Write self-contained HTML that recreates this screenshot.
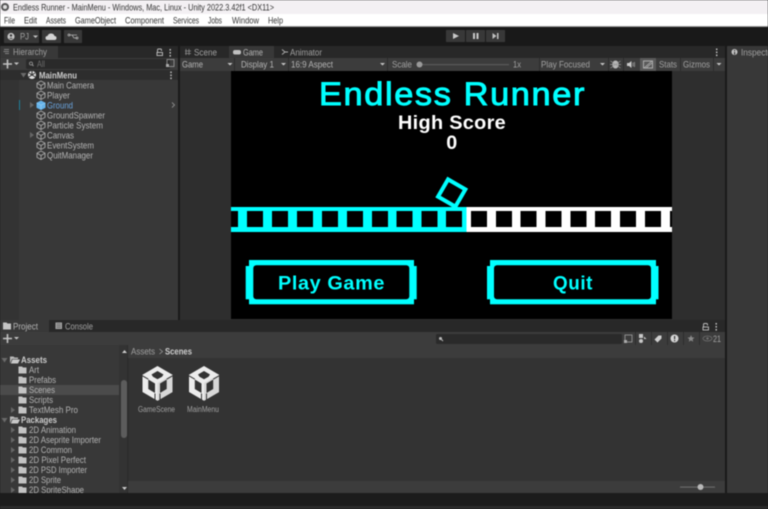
<!DOCTYPE html>
<html lang="en"><head><meta charset="utf-8"><title>Endless Runner - MainMenu - Unity</title>
<style>
html,body{margin:0;padding:0;background:#1c1c1c;width:768px;height:509px;overflow:hidden}
svg{display:block;position:absolute;left:0;top:0}
text{font-family:"Liberation Sans",sans-serif;font-size:9px}
.u{fill:#b4b4b4}.d{fill:#a0a0a0}.b{font-weight:bold;fill:#cccccc}
</style></head><body>
<svg width="768" height="509" viewBox="0 0 768 509" xmlns="http://www.w3.org/2000/svg">
<defs>
<g id="cube" fill="none" stroke="#a8a8a8" stroke-width=".9"><path d="M4.500 .5L8.500 2.600V6.900L4.500 9 .5 6.900V2.600Z"/><path d="M.7 2.800L4.500 5 8.300 2.800M4.500 5V8.800"/></g>
<g id="folder"><path d="M0 1H3.500L4.500 2H8V8H0Z" fill="#c4c4c4"/></g>
<g id="ofolder"><path d="M0 1H3.500L4.500 2H8V3.500H2L0 8Z" fill="#b8b8b8"/><path d="M2.500 4H10L8 8H.8Z" fill="#c8c8c8"/></g>
<path id="tri" d="M0 0L4 3 0 6Z" fill="#666"/>
<path id="trid" d="M0 0H6L3 4.500Z" fill="#6a6a6a"/>
<path id="arr" d="M1 0H6L3.500 2.500Z" fill="#c4c4c4"/>
<g id="unity">
<path d="M15 0L30 8.700V26L15 34.700 0 26V8.700Z" fill="#ececec"/>
<path d="M15 17L30 8.700V26L15 34.700Z" fill="#d8d8d8"/>
<path d="M15 5L21 8.500 19.500 10.800 15 13.300 10.500 10.800 9 8.500Z" fill="#333"/>
<path d="M5.800 13.500L12.500 17.500V27L5.800 23Z" fill="#333"/>
<path d="M24.200 13.500L17.500 17.500V27L24.200 23Z" fill="#333"/>
<path d="M0 9.800L5.800 13.200M30 9.800L24.200 13.200M12.500 27.500V34.700M17.500 27.500V34.700" stroke="#333" stroke-width="1" fill="none"/>
</g>
<g id="lock" fill="none" stroke="#c0c0c0" stroke-width=".9"><path d="M1 4V1.500Q1 .5 2 .5H4Q5 .5 5 1.500V2.500"/><rect x=".5" y="4" width="5.500" height="3"/></g>
<g id="dots" fill="#c4c4c4"><rect width="1.400" height="1.600"/><rect y="3" width="1.400" height="1.600"/><rect y="6" width="1.400" height="1.600"/></g>
<g id="plus"><path d="M3.700 0h1.600v3.700H9v1.600H5.300V9H3.700V5.300H0V3.700h3.700z" fill="#c4c4c4"/><path d="M11 3h5l-2.500 2.500z" fill="#c4c4c4"/></g>
</defs>
<g style="filter:blur(.4px)">
<!-- OS title + menu -->
<rect width="768" height="14" fill="#f3f0f3"/>
<rect y="14" width="768" height="12" fill="#fff"/>
<rect y="26" width="768" height="1" fill="#9a9a9a"/>
<circle cx="5" cy="7" r="4" fill="#555"/><circle cx="5" cy="7" r="2" fill="#ddd"/>
<text x="13" y="10.500" textLength="261" lengthAdjust="spacingAndGlyphs" fill="#333">Endless Runner - MainMenu - Windows, Mac, Linux - Unity 2022.3.42f1 &lt;DX11&gt;</text>
<g fill="#333">
<text x="4" y="23.500" textLength="11" lengthAdjust="spacingAndGlyphs">File</text>
<text x="24" y="23.500" textLength="13" lengthAdjust="spacingAndGlyphs">Edit</text>
<text x="46" y="23.500" textLength="20" lengthAdjust="spacingAndGlyphs">Assets</text>
<text x="75" y="23.500" textLength="41" lengthAdjust="spacingAndGlyphs">GameObject</text>
<text x="125" y="23.500" textLength="39" lengthAdjust="spacingAndGlyphs">Component</text>
<text x="173" y="23.500" textLength="26" lengthAdjust="spacingAndGlyphs">Services</text>
<text x="208" y="23.500" textLength="14" lengthAdjust="spacingAndGlyphs">Jobs</text>
<text x="232" y="23.500" textLength="27" lengthAdjust="spacingAndGlyphs">Window</text>
<text x="268" y="23.500" textLength="15" lengthAdjust="spacingAndGlyphs">Help</text>
</g>
<!-- Unity toolbar -->
<rect y="27" width="768" height="19" fill="#191919"/>
<rect x="4" y="30" width="35" height="13" fill="#383838"/>
<circle cx="11" cy="36.500" r="3.600" fill="#c4c4c4"/><circle cx="11" cy="35.500" r="1.200" fill="#383838"/><path d="M9 38.800q2-2 4 0z" fill="#383838"/>
<text x="20" y="39.500" textLength="9" lengthAdjust="spacingAndGlyphs" class="d">PJ</text>
<use href="#arr" x="32" y="35.500"/>
<rect x="42" y="30" width="19" height="13" fill="#383838"/>
<path d="M47.500 40a2 2 0 0 1 0-4q1-2.800 4-2.500 2.500.3 3 2.500a2 2 0 0 1 0 4z" fill="#d4d4d4"/>
<rect x="64" y="30" width="18" height="13" fill="#383838"/>
<g fill="none" stroke="#b0b0b0" stroke-width=".8"><path d="M69 35h3l2 3h3M72 35h5"/><circle cx="69" cy="35" r="1"/><circle cx="77" cy="38" r="1"/></g>
<rect x="446" y="30" width="19" height="12" fill="#383838"/><rect x="466" y="30" width="19" height="12" fill="#383838"/><rect x="486" y="30" width="19" height="12" fill="#383838"/>
<path d="M453 33l6 3-6 3z" fill="#c8c8c8"/>
<rect x="473" y="33" width="2" height="6" fill="#c8c8c8"/><rect x="476.500" y="33" width="2" height="6" fill="#c8c8c8"/>
<path d="M492.500 33l4 3-4 3z" fill="#c0c0c0"/><rect x="497" y="33" width="1.500" height="6" fill="#c0c0c0"/>
<!-- Hierarchy -->
<rect y="46" width="178" height="12" fill="#282828"/>
<rect y="46" width="58" height="12" fill="#383838"/>
<rect x="0" y="58" width="178" height="262" fill="#383838"/>
<rect x="0" y="70" width="19" height="250" fill="#333"/>
<rect y="58" width="178" height="12" fill="#3c3c3c"/>
<path d="M4 49.500h5M3.500 51.500h5.500M5 53.500h4" stroke="#999" stroke-width=".8"/>
<text x="13" y="55" textLength="34" lengthAdjust="spacingAndGlyphs" class="d">Hierarchy</text>
<use href="#lock" x="156.500" y="48.500"/><use href="#dots" x="169.500" y="49"/>
<use href="#plus" x="3" y="59.500"/>
<rect x="26" y="59" width="144" height="10" rx="2" fill="#2a2a2a"/>
<circle cx="31" cy="63.500" r="1.500" fill="none" stroke="#999" stroke-width=".8"/><path d="M32 64.500l1.500 1.500" stroke="#999"/>
<text x="37" y="67" textLength="8" lengthAdjust="spacingAndGlyphs" fill="#6c6c6c">All</text>
<rect x="167" y="59.500" width="7" height="7" fill="none" stroke="#aaa" stroke-width=".7"/><rect x="166" y="64" width="3" height="3" fill="#aaa"/>
<rect y="70" width="178" height="10" fill="#2d2d2d"/>
<use href="#trid" x="20.500" y="73"/>
<circle cx="32" cy="75" r="4" fill="#e0e0e0"/><path d="M32 71v4l-3.400 2M32 75l3.400 2M29 73l3 2 3-2" stroke="#2d2d2d" stroke-width="1" fill="none"/>
<text x="39" y="78.500" textLength="38" lengthAdjust="spacingAndGlyphs" class="b">MainMenu</text>
<use href="#dots" x="170.300" y="71.500"/>
<use href="#cube" x="36.500" y="80.500"/><text x="47" y="88.300" textLength="47" lengthAdjust="spacingAndGlyphs" class="u">Main Camera</text>
<use href="#cube" x="36.500" y="90.500"/><text x="47" y="98.300" textLength="23" lengthAdjust="spacingAndGlyphs" class="u">Player</text>
<rect x="19" y="100" width="1" height="10" fill="#1e7f9a"/>
<use href="#tri" x="30" y="102"/>
<path d="M41 100.500l4.500 2.300v4.900L41 110l-4.500-2.300v-4.900z" fill="#66b3ea"/><path d="M36.700 103l4.300 2.200 4.300-2.200M41 105v4.800" stroke="#a8d8f5" stroke-width=".5" fill="none"/>
<text x="47" y="108.300" textLength="26" lengthAdjust="spacingAndGlyphs" fill="#6aa3dc">Ground</text>
<path d="M172 102.500l2.500 2.500-2.500 2.500" fill="none" stroke="#888"/>
<use href="#cube" x="36.500" y="110.500"/><text x="47" y="118.300" textLength="58" lengthAdjust="spacingAndGlyphs" class="u">GroundSpawner</text>
<use href="#cube" x="36.500" y="120.500"/><text x="47" y="128.300" textLength="56" lengthAdjust="spacingAndGlyphs" class="u">Particle System</text>
<use href="#tri" x="30" y="132"/>
<use href="#cube" x="36.500" y="130.500"/><text x="47" y="138.300" textLength="27" lengthAdjust="spacingAndGlyphs" class="u">Canvas</text>
<use href="#cube" x="36.500" y="140.500"/><text x="47" y="148.300" textLength="47" lengthAdjust="spacingAndGlyphs" class="u">EventSystem</text>
<use href="#cube" x="36.500" y="150.500"/><text x="47" y="158.300" textLength="46" lengthAdjust="spacingAndGlyphs" class="u">QuitManager</text>
<rect x="178" y="46" width="2" height="274" fill="#191919"/>
<!-- Game panel -->
<rect x="180" y="46" width="545" height="12" fill="#282828"/>
<rect x="229" y="46" width="45" height="12" fill="#383838"/>
<rect x="180" y="58" width="545" height="13" fill="#3c3c3c"/>
<rect x="180" y="71" width="545" height="249" fill="#2e2e2e"/>
<path d="M186 49v6M189 49v6M185 51h6M185 53.500h6" stroke="#8a8a8a" stroke-width=".8"/>
<text x="194" y="55.300" textLength="23" lengthAdjust="spacingAndGlyphs" class="d">Scene</text>
<rect x="233" y="50" width="8" height="4.500" rx="2" fill="#c0c0c0"/>
<text x="243" y="55.300" textLength="20" lengthAdjust="spacingAndGlyphs" class="u">Game</text>
<path d="M282 49.500l3 2.500-3 2.500M285 52h3" stroke="#b0b0b0" fill="none" stroke-width=".9"/>
<text x="290" y="55.300" textLength="32" lengthAdjust="spacingAndGlyphs" class="d">Animator</text>
<use href="#dots" x="716" y="48.500"/>
<text x="182" y="67.500" textLength="21" lengthAdjust="spacingAndGlyphs" class="u">Game</text>
<use href="#arr" x="226.500" y="63"/>
<rect x="234" y="58" width="1" height="13" fill="#2c2c2c"/>
<text x="241" y="67.500" textLength="33" lengthAdjust="spacingAndGlyphs" class="u">Display 1</text>
<use href="#arr" x="280" y="63"/>
<rect x="288" y="58" width="1" height="13" fill="#2c2c2c"/>
<text x="291" y="67.500" textLength="42" lengthAdjust="spacingAndGlyphs" class="u">16:9 Aspect</text>
<use href="#arr" x="379" y="63"/>
<rect x="387" y="58" width="1" height="13" fill="#2c2c2c"/>
<text x="392" y="67.500" textLength="20" lengthAdjust="spacingAndGlyphs" class="d">Scale</text>
<rect x="419" y="64" width="90" height="1.200" fill="#5a5a5a"/>
<circle cx="419.500" cy="64.500" r="3" fill="#9a9a9a"/>
<text x="513" y="67.500" textLength="8" lengthAdjust="spacingAndGlyphs" class="d">1x</text>
<rect x="539" y="58" width="1" height="13" fill="#2c2c2c"/>
<text x="541" y="67.500" textLength="49" lengthAdjust="spacingAndGlyphs" class="d">Play Focused</text>
<use href="#arr" x="599" y="63"/>
<rect x="608" y="58" width="1" height="13" fill="#2c2c2c"/>
<ellipse cx="615.500" cy="64.500" rx="3.200" ry="4" fill="#b8b8b8"/><path d="M610.500 61l10 7M610.500 68l10-7M610 64.500h11" stroke="#9a9a9a" stroke-width=".7"/>
<rect x="623" y="58" width="1" height="13" fill="#2c2c2c"/>
<path d="M627 63h2l2.500-2v7l-2.500-2h-2z" fill="#c8c8c8"/><path d="M633 62.500v4M634.500 62v5" stroke="#aaa" stroke-width=".7"/>
<rect x="640" y="58" width="16" height="13" fill="#5a5a5a"/>
<rect x="643.500" y="61" width="9" height="7" fill="none" stroke="#b4b4b4" stroke-width=".9"/><path d="M644 68l8-7M646 68l6-5" stroke="#b4b4b4" stroke-width=".8"/>
<text x="659" y="67.500" textLength="18" lengthAdjust="spacingAndGlyphs" class="d">Stats</text>
<rect x="680" y="58" width="1" height="13" fill="#2c2c2c"/>
<text x="683" y="67.500" textLength="27" lengthAdjust="spacingAndGlyphs" class="d">Gizmos</text>
<rect x="713" y="58" width="1" height="13" fill="#2c2c2c"/>
<use href="#arr" x="715.500" y="63"/>
<!-- Game view -->
<rect x="231" y="71" width="441" height="248" fill="#000"/>
<text x="319" y="105" textLength="267" lengthAdjust="spacingAndGlyphs" style="font-size:32px;letter-spacing:1.500px" fill="#00ffff" stroke="#00ffff" stroke-width=".9">Endless Runner</text>
<text x="398" y="129" textLength="108" lengthAdjust="spacingAndGlyphs" style="font-size:19.500px;font-weight:bold;letter-spacing:.3px" fill="#fff">High Score</text>
<text x="446.300" y="149" textLength="11" lengthAdjust="spacingAndGlyphs" style="font-size:19.500px;font-weight:bold" fill="#fff">0</text>
<g transform="translate(451.700 193) rotate(30)"><rect x="-10" y="-10" width="20" height="20" fill="#000" stroke="#00ffff" stroke-width="4"/></g>
<rect x="231" y="207" width="235.500" height="25" fill="#00ffff"/>
<rect x="466.500" y="207" width="205.500" height="25" fill="#fff"/>
<g fill="#000">
<rect x="231" y="211" width="7" height="16"/><rect x="247" y="211" width="16" height="16"/><rect x="272" y="211" width="16" height="16"/><rect x="297" y="211" width="16" height="16"/><rect x="322" y="211" width="16" height="16"/><rect x="347" y="211" width="16" height="16"/><rect x="372" y="211" width="16" height="16"/><rect x="396.500" y="211" width="16" height="16"/><rect x="421.500" y="211" width="16" height="16"/><rect x="446" y="211" width="16" height="16"/>
<rect x="471" y="211" width="16" height="16"/><rect x="496" y="211" width="16" height="16"/><rect x="520.500" y="211" width="16" height="16"/><rect x="545.500" y="211" width="16" height="16"/><rect x="570.500" y="211" width="16" height="16"/><rect x="595" y="211" width="16" height="16"/><rect x="620" y="211" width="16" height="16"/><rect x="645" y="211" width="16" height="16"/><rect x="670" y="211" width="2" height="16"/>
</g>
<g fill="#00ffff">
<rect x="249" y="260" width="165" height="44.300"/><rect x="245.700" y="266" width="171" height="33.300"/>
<rect x="490" y="260" width="166" height="44.300"/><rect x="487" y="266" width="171.500" height="33.300"/>
</g>
<rect x="253.300" y="265.300" width="156" height="34" rx="3" fill="#000"/>
<rect x="494" y="265.300" width="157" height="34" rx="3" fill="#000"/>
<text x="278" y="289.300" textLength="107" lengthAdjust="spacingAndGlyphs" style="font-size:19.500px;font-weight:bold;letter-spacing:.6px" fill="#00ffff">Play Game</text>
<text x="553" y="289.300" textLength="40" lengthAdjust="spacingAndGlyphs" style="font-size:19.500px;font-weight:bold;letter-spacing:.6px" fill="#00ffff">Quit</text>
<!-- Inspector -->
<rect x="725" y="46" width="2" height="447" fill="#191919"/>
<rect x="727" y="46" width="41" height="447" fill="#383838"/>
<circle cx="734.500" cy="52" r="3" fill="#c4c4c4"/><rect x="734" y="50" width="1.200" height="1.200" fill="#383838"/><rect x="734" y="52" width="1.200" height="2.500" fill="#383838"/>
<text x="741" y="55.300" textLength="34" lengthAdjust="spacingAndGlyphs" class="d">Inspector</text>
<!-- Project -->
<rect y="320" width="725" height="173" fill="#333"/>
<rect y="320" width="725" height="12" fill="#282828"/>
<rect width="49" y="320" height="12" fill="#383838"/>
<use href="#folder" x="3" y="321.500"/>
<text x="13" y="329.300" textLength="25" lengthAdjust="spacingAndGlyphs" class="u">Project</text>
<rect x="55.500" y="322.500" width="6.500" height="6.500" fill="#aaa"/><path d="M56.500 324h4.500M56.500 325.800h4.500M56.500 327.500h4.500" stroke="#333" stroke-width=".5"/>
<text x="65" y="329.300" textLength="28" lengthAdjust="spacingAndGlyphs" class="d">Console</text>
<use href="#lock" x="702.500" y="323"/><use href="#dots" x="715.500" y="323"/>
<rect y="332" width="725" height="13" fill="#3c3c3c"/>
<rect y="345" width="119" height="148" fill="#383838"/>
<use href="#plus" x="3" y="334"/>
<rect x="436" y="334" width="186" height="10" rx="1.500" fill="#2a2a2a"/>
<circle cx="440.500" cy="338.500" r="1.500" fill="#bbb"/><path d="M441.500 339.500l1.500 1.500" stroke="#bbb"/>
<rect x="625" y="335" width="7" height="7" fill="none" stroke="#aaa" stroke-width=".7"/><rect x="624" y="340" width="3" height="3" fill="#aaa"/>
<rect x="635" y="332" width="1" height="13" fill="#2c2c2c"/><rect x="651" y="332" width="1" height="13" fill="#2c2c2c"/><rect x="667" y="332" width="1" height="13" fill="#2c2c2c"/><rect x="683" y="332" width="1" height="13" fill="#2c2c2c"/><rect x="699" y="332" width="1" height="13" fill="#2c2c2c"/>
<rect x="639" y="334" width="4" height="4" fill="#c8c8c8"/><circle cx="641" cy="341" r="2" fill="#c8c8c8"/><path d="M644 336.500l2.500 2.500H644z" fill="#c8c8c8"/>
<path d="M654.500 339.500l4-4h3v3l-4 4z" fill="#d0d0d0"/>
<circle cx="674.500" cy="338.500" r="4" fill="#d4d4d4"/><rect x="674" y="336" width="1.200" height="3.200" fill="#333"/><rect x="674" y="340" width="1.200" height="1.200" fill="#333"/>
<path d="M691 335l1 2.400 2.500.2-1.900 1.600.6 2.500-2.200-1.300-2.200 1.300.6-2.500-1.900-1.600 2.500-.2z" fill="#8a8a8a"/>
<ellipse cx="707.500" cy="338.500" rx="4.500" ry="2.500" fill="none" stroke="#707070" stroke-width=".8"/><circle cx="707.500" cy="338.500" r="1.200" fill="#707070"/>
<text x="713" y="342" textLength="8" lengthAdjust="spacingAndGlyphs" class="d">21</text>
<!-- project tree -->
<rect y="385" width="119" height="10" fill="#4b4b4b"/>
<rect x="119" y="345" width="9" height="148" fill="#333"/>
<rect x="127.500" y="345" width=".7" height="148" fill="#262626"/>
<path d="M122 353l2.500-3 2.500 3z" fill="#ccc"/><path d="M122 487h5l-2.500 3z" fill="#ccc"/>
<rect x="121" y="380" width="6" height="58" rx="3" fill="#5c5c5c"/>
<use href="#trid" x="1.500" y="358"/><use href="#ofolder" x="10" y="355.500"/><text x="21" y="363" textLength="26" lengthAdjust="spacingAndGlyphs" class="b">Assets</text>
<use href="#folder" x="18.500" y="365.500"/><text x="29" y="373" textLength="10" lengthAdjust="spacingAndGlyphs" class="u">Art</text>
<use href="#folder" x="18.500" y="375.500"/><text x="29" y="383" textLength="27" lengthAdjust="spacingAndGlyphs" class="u">Prefabs</text>
<use href="#folder" x="18.500" y="385.500"/><text x="29" y="393" textLength="26" lengthAdjust="spacingAndGlyphs" class="u">Scenes</text>
<use href="#folder" x="18.500" y="395.500"/><text x="29" y="403" textLength="24" lengthAdjust="spacingAndGlyphs" class="u">Scripts</text>
<use href="#tri" x="11" y="407"/><use href="#folder" x="18.500" y="405.500"/><text x="29" y="413" textLength="49" lengthAdjust="spacingAndGlyphs" class="u">TextMesh Pro</text>
<use href="#trid" x="1.500" y="418"/><use href="#ofolder" x="10" y="415.500"/><text x="21" y="423" textLength="36" lengthAdjust="spacingAndGlyphs" class="b">Packages</text>
<use href="#tri" x="11" y="427"/><use href="#folder" x="18.500" y="425.500"/><text x="29" y="433" textLength="47" lengthAdjust="spacingAndGlyphs" class="u">2D Animation</text>
<use href="#tri" x="11" y="437"/><use href="#folder" x="18.500" y="435.500"/><text x="29" y="443" textLength="72" lengthAdjust="spacingAndGlyphs" class="u">2D Aseprite Importer</text>
<use href="#tri" x="11" y="447"/><use href="#folder" x="18.500" y="445.500"/><text x="29" y="453" textLength="43" lengthAdjust="spacingAndGlyphs" class="u">2D Common</text>
<use href="#tri" x="11" y="457"/><use href="#folder" x="18.500" y="455.500"/><text x="29" y="463" textLength="57" lengthAdjust="spacingAndGlyphs" class="u">2D Pixel Perfect</text>
<use href="#tri" x="11" y="467"/><use href="#folder" x="18.500" y="465.500"/><text x="29" y="473" textLength="58" lengthAdjust="spacingAndGlyphs" class="u">2D PSD Importer</text>
<use href="#tri" x="11" y="477"/><use href="#folder" x="18.500" y="475.500"/><text x="29" y="483" textLength="32" lengthAdjust="spacingAndGlyphs" class="u">2D Sprite</text>
<use href="#tri" x="11" y="487"/><use href="#folder" x="18.500" y="485.500"/><text x="29" y="492.800" textLength="55" lengthAdjust="spacingAndGlyphs" class="u">2D SpriteShape</text>
<!-- breadcrumb & content -->
<rect x="128" y="345" width="597" height="13" fill="#3c3c3c"/>
<text x="131" y="354.500" textLength="24" lengthAdjust="spacingAndGlyphs" class="d">Assets</text>
<path d="M159.500 349l3 2.500-3 2.500" fill="none" stroke="#999" stroke-width=".8"/>
<text x="165" y="354.500" textLength="27" lengthAdjust="spacingAndGlyphs" class="b">Scenes</text>
<use href="#unity" x="142.500" y="366"/>
<use href="#unity" x="189" y="366"/>
<text x="138" y="412" textLength="37" lengthAdjust="spacingAndGlyphs" style="font-size:8px" class="d">GameScene</text>
<text x="187" y="412" textLength="32" lengthAdjust="spacingAndGlyphs" style="font-size:8px" class="d">MainMenu</text>
<rect x="128" y="481" width="597" height="12" fill="#3c3c3c"/>
<rect x="680" y="486.500" width="35" height="1.200" fill="#6a6a6a"/>
<circle cx="700.500" cy="487" r="3" fill="#b8b8b8"/>
<!-- status -->
<rect y="493" width="768" height="13" fill="#1c1c1c"/>
<rect y="506" width="768" height="3" fill="#2b2b2b"/>
</g>
</svg>
</body></html>
